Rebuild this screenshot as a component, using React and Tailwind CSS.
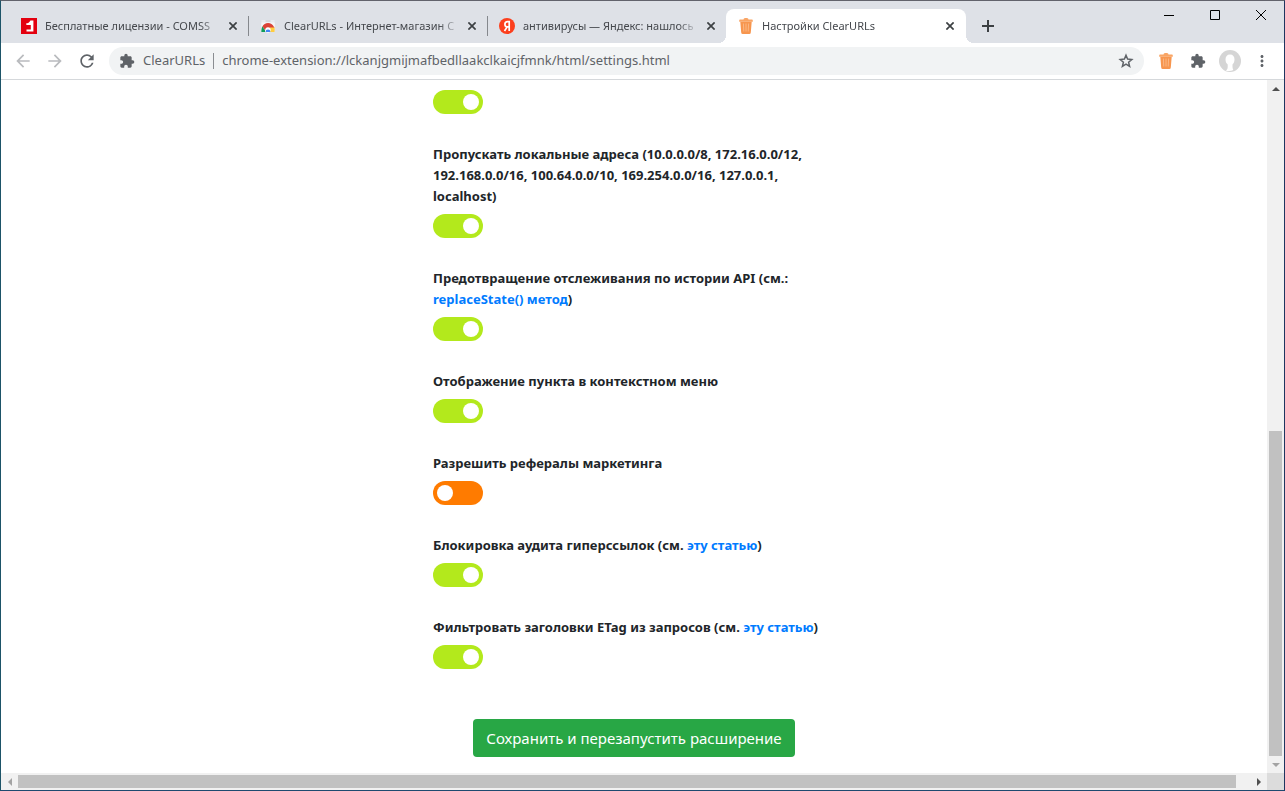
// App.jsx

import { useState } from 'react';
import {
  MdArrowBack,
  MdArrowForward,
  MdExtension,
  MdMoreVert,
  MdRefresh,
} from 'react-icons/md';

const TABS = [
  { id: 'comss', title: 'Бесплатные лицензии - COMSS', Icon: ComssIcon },
  { id: 'store', title: 'ClearURLs - Интернет-магазин C', Icon: StoreIcon },
  { id: 'yandex', title: 'антивирусы — Яндекс: нашлось', Icon: YandexIcon },
  { id: 'settings', title: 'Настройки ClearURLs', Icon: TrashIcon },
];

const OPTIONS = [
  { id: 'badged', enabled: true },
  {
    id: 'local',
    enabled: true,
    text: 'Пропускать локальные адреса (10.0.0.0/8, 172.16.0.0/12, 192.168.0.0/16, 100.64.0.0/10, 169.254.0.0/16, 127.0.0.1, localhost)',
  },
  {
    id: 'history',
    enabled: true,
    text: 'Предотвращение отслеживания по истории API (см.: ',
    link: 'replaceState() метод',
  },
  { id: 'context', enabled: true, text: 'Отображение пункта в контекстном меню' },
  { id: 'referral', enabled: false, text: 'Разрешить рефералы маркетинга' },
  {
    id: 'ping',
    enabled: true,
    text: 'Блокировка аудита гиперссылок (см. ',
    link: 'эту статью',
  },
  {
    id: 'etag',
    enabled: true,
    text: 'Фильтровать заголовки ETag из запросов (см. ',
    link: 'эту статью',
  },
];

function App() {
  const [activeTab, setActiveTab] = useState('settings');

  return (
    <div className="flex h-screen flex-col overflow-hidden border border-t-[#62636c] border-r-[#1f3560] border-b-[#1f4a70] border-l-[#1d5468] bg-white font-['Noto_Sans','Open_Sans',sans-serif]">
      <TabStrip activeTab={activeTab} onSelect={setActiveTab} />
      <Toolbar />
      <div className="flex min-h-0 flex-1">
        <SettingsPage />
        <VerticalScrollbar />
      </div>
      <HorizontalScrollbar />
    </div>
  );
}

function TabStrip({ activeTab, onSelect }) {
  return (
    <header className="flex h-[42px] shrink-0 items-end bg-[#dee1e7] pl-2">
      {TABS.map((tab, index) => (
        <Tab
          key={tab.id}
          tab={tab}
          active={tab.id === activeTab}
          divider={index < TABS.length - 2}
          onSelect={() => onSelect(tab.id)}
        />
      ))}
      <button type="button" aria-label="Новая вкладка" className="flex h-[34px] w-11 items-center justify-center text-[#3c4043]">
        <svg className="size-3" viewBox="0 0 12 12" stroke="currentColor" strokeWidth="2">
          <path d="M6 0v12M0 6h12" />
        </svg>
      </button>
      <div className="ml-auto flex self-start text-black">
        <WindowButton label="Свернуть" path="M0 5.5h10" />
        <WindowButton label="Развернуть" path="M.5.5h9v9h-9z" />
        <WindowButton label="Закрыть" path="M0 0l10 10M10 0L0 10" />
      </div>
    </header>
  );
}

function Tab({ tab, active, divider, onSelect }) {
  const { title, Icon } = tab;

  return (
    <div
      className={
        active
          ? 'relative flex h-[34px] w-60 items-center rounded-t-lg bg-white pr-2 pl-3'
          : 'relative flex h-[34px] w-[239px] items-center pr-[7px] pl-3'
      }
    >
      {active && (
        <>
          <span className="absolute bottom-0 -left-2 size-2 bg-[radial-gradient(circle_at_0_0,transparent_8px,white_8px)]" />
          <span className="absolute -right-2 bottom-0 size-2 bg-[radial-gradient(circle_at_100%_0,transparent_8px,white_8px)]" />
        </>
      )}
      <button type="button" onClick={onSelect} className="flex min-w-0 flex-1 items-center gap-2 text-left">
        <Icon className="size-4 shrink-0" />
        <span className="flex-1 text-[11px] leading-4 whitespace-nowrap text-[#45484d] [mask-image:linear-gradient(to_right,black_88%,transparent)]">
          {title}
        </span>
      </button>
      <button type="button" aria-label="Закрыть вкладку" className="ml-1 flex size-4 items-center justify-center text-[#3c4043]">
        <svg className="size-2" viewBox="0 0 8 8" stroke="currentColor" strokeWidth="1.7">
          <path d="M.4.4l7.2 7.2M7.6.4L.4 7.6" />
        </svg>
      </button>
      {divider && <span className="absolute -right-px h-5 w-px bg-[#85888d]" />}
    </div>
  );
}

function WindowButton({ label, path }) {
  return (
    <button type="button" aria-label={label} className="flex h-7 w-[46px] items-center justify-center">
      <svg className="size-[10px]" viewBox="0 0 10 10" fill="none" stroke="currentColor">
        <path d={path} />
      </svg>
    </button>
  );
}

function Toolbar() {
  return (
    <div className="flex h-[37px] shrink-0 items-center border-b border-[#d5d8db] px-[6px] text-[#5f6368]">
      <ToolButton label="Назад">
        <MdArrowBack className="size-5 text-[#b9bbbe]" />
      </ToolButton>
      <ToolButton label="Вперёд">
        <MdArrowForward className="size-5 text-[#b9bbbe]" />
      </ToolButton>
      <ToolButton label="Обновить">
        <MdRefresh className="size-5" />
      </ToolButton>
      <div className="mx-[6px] flex h-7 flex-1 items-center rounded-full bg-[#f1f3f4] pr-[10px] pl-[10px] text-[13px]">
        <MdExtension className="size-4" />
        <span className="ml-2">ClearURLs</span>
        <span className="mx-2 h-4 w-px bg-[#8a8d91]" />
        <input
          type="text"
          aria-label="Адресная строка"
          defaultValue="chrome-extension://lckanjgmijmafbedllaakclkaicjfmnk/html/settings.html"
          className="min-w-0 flex-1 bg-transparent outline-none"
        />
        <button type="button" aria-label="Добавить в закладки">
          <StarIcon className="size-4" />
        </button>
      </div>
      <ToolButton label="ClearURLs">
        <TrashIcon className="size-4" />
      </ToolButton>
      <ToolButton label="Расширения">
        <MdExtension className="size-4" />
      </ToolButton>
      <ToolButton label="Профиль">
        <AvatarIcon className="size-[22px]" />
      </ToolButton>
      <ToolButton label="Меню">
        <MdMoreVert className="size-[18px]" />
      </ToolButton>
    </div>
  );
}

function ToolButton({ label, children }) {
  return (
    <button type="button" aria-label={label} className="flex h-7 w-8 items-center justify-center">
      {children}
    </button>
  );
}

function SettingsPage() {
  return (
    <main className="min-w-0 flex-1 overflow-hidden pt-[10px] text-[#212529]">
      <form className="mx-auto w-[402px]" onSubmit={(e) => e.preventDefault()}>
        <div className="flex flex-col gap-[30px]">
          {OPTIONS.map((option) => (
            <Option key={option.id} option={option} />
          ))}
        </div>
        <div className="mt-[50px] flex justify-center">
          <button type="submit" className="h-[38px] rounded-sm bg-[#28a745] px-[13px] text-[15px] whitespace-nowrap text-white hover:bg-[#218838]">
            Сохранить и перезапустить расширение
          </button>
        </div>
      </form>
    </main>
  );
}

function Option({ option }) {
  const { id, enabled, text, link } = option;

  return (
    <div className="flex flex-col items-start gap-[7px]">
      {text && (
        <label htmlFor={id} className="text-[13px] leading-[21px] font-bold">
          {text}
          {link && (
            <>
              <a href="#" className="text-[#007bff] hover:underline">{link}</a>)
            </>
          )}
        </label>
      )}
      <input
        id={id}
        type="checkbox"
        role="switch"
        aria-label={text ? undefined : 'Показывать счётчик'}
        defaultChecked={enabled}
        className="h-6 w-[50px] cursor-pointer appearance-none rounded-full bg-[#ff7b00] p-1 before:block before:size-4 before:rounded-full before:bg-white checked:bg-[#b3e91c] checked:pl-[30px]"
      />
    </div>
  );
}

function VerticalScrollbar() {
  return (
    <div className="flex w-[17px] shrink-0 flex-col bg-[#f1f1f1]">
      <ScrollArrow path="M4 0l4 4H0z" className="h-[17px] w-full text-[#505050]" />
      <div className="flex flex-1 flex-col justify-end px-[2px]">
        <div className="h-[49.3%] bg-[#c1c1c1]" />
      </div>
      <ScrollArrow path="M0 0h8L4 4z" className="h-[17px] w-full text-[#a3a3a3]" />
    </div>
  );
}

function HorizontalScrollbar() {
  return (
    <div className="flex h-[17px] shrink-0 bg-[#f1f1f1]">
      <ScrollArrow path="M6 -2v8L2 2z" className="h-full w-[17px] text-[#a3a3a3]" />
      <div className="flex-1 py-[2px]">
        <div className="h-full w-[98.9%] bg-[#c1c1c1]" />
      </div>
      <ScrollArrow path="M2 -2v8l4 -4z" className="h-full w-[17px] text-[#505050]" />
      <div className="w-[17px] bg-[#dcdcdc]" />
    </div>
  );
}

function ScrollArrow({ path, className }) {
  return (
    <div className={`flex shrink-0 items-center justify-center ${className}`}>
      <svg className="h-1 w-2 overflow-visible" viewBox="0 0 8 4" fill="currentColor">
        <path d={path} />
      </svg>
    </div>
  );
}

// Icons

function StarIcon({ className }) {
  return (
    <svg className={className} viewBox="0 0 16 16" fill="none" stroke="currentColor" strokeWidth="1.5">
      <path d="M8 2.2l1.6 3.900 4.200.4-3.200 2.700 1 4.100L8 11.100l-3.600 2.200 1-4.100-3.200-2.700 4.200-.4z" />
    </svg>
  );
}

function ComssIcon({ className }) {
  return (
    <svg className={className} viewBox="0 0 16 16">
      <path fill="#e3000f" d="M0 0h16v16H0z" />
      <path fill="#fff" d="M9.400 2.500h3V13.500H5.500v-2h4.300V7H5.500L5 5.600c2-.2 3.400-1.200 4.400-3.100z" />
    </svg>
  );
}

function StoreIcon({ className }) {
  return (
    <svg className={className} viewBox="0 0 16 16">
      <path fill="#e9ebee" d="M1.5 2h13l.5 11.5H1z" />
      <path fill="#c5c9ce" d="M5.5 2.5h5v1h-5z" />
      <path fill="#f5f6f7" d="M1.4 4.5h13.2l.2 4H1.2z" />
      <path fill="#db4437" d="M2.4 8.4a6.3 6.3 0 0 1 11.3 0l.8 1.6H8L4.9 12z" />
      <path fill="#0f9d58" d="M2.4 8.4L5 12.2V14H1.4c-.1-2 .2-4 1-5.6z" />
      <path fill="#ffcd40" d="M9.5 9.6h5c.3 1.5.3 3 0 4.400H10z" />
      <circle cx="8" cy="12" r="2.7" fill="#fff" />
      <path fill="#4285f4" d="M5.600 14a2.400 2.400 0 1 1 4.800 0z" />
    </svg>
  );
}

function YandexIcon({ className }) {
  return (
    <svg className={className} viewBox="0 0 16 16">
      <circle cx="8" cy="8" r="8" fill="#fc3f1d" />
      <path
        fill="none"
        stroke="#fff"
        strokeWidth="1.7"
        d="M10.200 13V3.600H8.600c-1.800 0-2.700 1.100-2.700 2.600s.9 2.700 2.700 2.700h1.600M8.200 8.900L5.500 13"
      />
    </svg>
  );
}

function TrashIcon({ className }) {
  return (
    <svg className={className} viewBox="0 0 16 16">
      <path fill="#f9a565" d="M5.5 1.5Q5.5 0 7 0h2q1.500 0 1.500 1.500H14q.8 0 .8.900v1.400H1.200V2.400q0-.9.800-.9z" />
      <path fill="#f7964f" d="M2.300 3.800h11.400l-.9 10.700q-.1 1.500-1.500 1.500H4.700q-1.400 0-1.500-1.500z" />
      <path stroke="#fbb784" strokeWidth="1" d="M5.400 5.500l.4 8M8 5.500v8M10.600 5.500l-.4 8" />
    </svg>
  );
}

function AvatarIcon({ className }) {
  return (
    <svg className={className} viewBox="0 0 22 22">
      <circle cx="11" cy="11" r="11" fill="#d5d5d5" />
      <path
        fill="#fff"
        d="M11 4.500c3 0 4.500 2.100 4.500 5 0 2.200-.8 3.900-2 4.900v2.100c0 1.500.4 2.500.8 3.500-2 1.100-5.200 1.200-7.600.4 1.300-.7 2-1.800 2-3.500v-2.500c-1.300-1-2.200-2.700-2.200-4.900 0-2.900 1.500-5 4.500-5z"
      />
    </svg>
  );
}

export default App;
